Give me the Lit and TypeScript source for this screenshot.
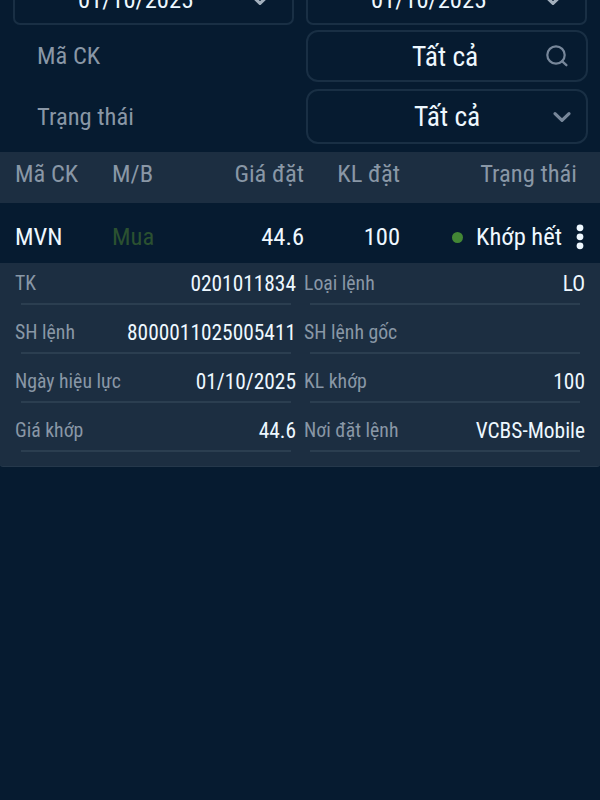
import { LitElement, html, css, svg } from "lit";
import { customElement } from "lit/decorators.js";

const chevron = html`<svg class="chev" viewBox="0 0 20 14" width="20" height="14">
  ${svg`<path d="M3 3.6 L10 10.4 L17 3.6" fill="none" stroke="currentColor" stroke-width="3.2" stroke-linecap="round" stroke-linejoin="round"/>`}
</svg>`;

const search = html`<svg class="search" viewBox="0 0 24 24" width="24" height="24">
  ${svg`<circle cx="11" cy="11" r="8.7" fill="none" stroke="currentColor" stroke-width="2.2"/><path d="M17 17.2 L21.4 21.2" stroke="currentColor" stroke-width="2.3" stroke-linecap="round"/>`}
</svg>`;

const details = [
  ["TK", "0201011834", "Loại lệnh", "LO"],
  ["SH lệnh", "8000011025005411", "SH lệnh gốc", ""],
  ["Ngày hiệu lực", "01/10/2025", "KL khớp", "100"],
  ["Giá khớp", "44.6", "Nơi đặt lệnh", "VCBS-Mobile"],
];

@customElement("app-root")
export class AppRoot extends LitElement {
  static styles = css`
    :host {
      display: block;
      width: 600px;
      height: 800px;
      overflow: hidden;
      background: #061b30;
      color: #eef8ff;
      font-family: "Roboto Condensed", Roboto, sans-serif;
      font-stretch: 75%;
      font-size: 24.55px;
      white-space: nowrap;
    }
    * { box-sizing: border-box; }
    svg { display: block; flex: none; }
    .dates { display: flex; gap: 12px; padding-left: 13px; height: 25px; align-items: flex-end; }
    .box { border: 2px solid #192f44; border-radius: 12px; display: flex; align-items: center; }
    .date { width: 281px; height: 51px; border-radius: 7px; padding: 0 22px 0 63px; justify-content: space-between; flex: none; }
    .date .txt { margin-top: -1px; }
    .field { display: flex; justify-content: space-between; padding: 0 12px 0 37px; }
    .field.code { margin-top: 5px; height: 52px; }
    .field.state { margin-top: 7px; height: 55px; }
    .field .label { color: #8997a6; line-height: 51px; }
    .field.state .label { line-height: 55px; }
    .field .box { width: 282px; font-size: 27.5px; justify-content: space-between; }
    .code .box { padding: 0 17px 0 104px; }
    .state .box { padding: 0 14px 0 106px; }
    .box svg { color: #77879a; }
    .date.box svg { color: #a3b0bd; }
    .grid { display: grid; grid-template-columns: 97px 89px 103px 96px 1fr; padding-left: 15px; align-items: start; }
    .r { text-align: right; }
    .head { margin-top: 8px; height: 51px; background: #1c2e41; color: #8997a6; padding-right: 23px; line-height: 43px; }
    .order { height: 60px; padding-right: 15px; line-height: 54px; padding-top: 7px; }
    .buy { color: #2b5130; }
    .status { display: flex; align-items: center; justify-content: flex-end; }
    .dot { width: 11px; height: 11px; border-radius: 50%; background: #438735; margin-right: 13px; }
    .menu { margin-left: 13px; }
    .panel { background: #1c2e41; height: 204px; border-bottom: 1px solid #25384b; border-radius: 0 0 5px 5px / 0 0 2px 2px; }
    .line { display: flex; height: 49px; padding: 0 15px; gap: 8px; }
    .pair { position: relative; display: flex; justify-content: space-between; height: 41px; width: 281px; line-height: 42px; font-size: 21.4px; }
    .pair::after { content: ""; position: absolute; left: 6px; right: 5px; bottom: -1px; height: 2px; background: #2b3e50; }
    .pair .k { font-size: 19.75px; color: #8997a6; line-height: 41px; }
  `;

  render() {
    return html`
      <div class="dates">
        ${[0, 1].map(() => html`<div class="box date"><span class="txt">01/10/2025</span>${chevron}</div>`)}
      </div>
      <div class="field code">
        <span class="label">Mã CK</span>
        <div class="box"><span class="txt">Tất cả</span>${search}</div>
      </div>
      <div class="field state">
        <span class="label">Trạng thái</span>
        <div class="box"><span class="txt">Tất cả</span>${chevron}</div>
      </div>
      <div class="grid head">
        <span>Mã CK</span><span>M/B</span><span class="r">Giá đặt</span><span class="r">KL đặt</span><span class="r">Trạng thái</span>
      </div>
      <div class="grid order">
        <span>MVN</span><span class="buy">Mua</span><span class="r">44.6</span><span class="r">100</span>
        <div class="status">
          <i class="dot"></i><span>Khớp hết</span>
          <svg class="menu" width="10" height="28" viewBox="0 0 10 28">
            ${[4.8, 13.8, 22.8].map((y) => svg`<circle cx="5" cy=${y} r="3.4" fill="currentColor"/>`)}
          </svg>
        </div>
      </div>
      <div class="panel">
        ${details.map(
          ([a, b, c, d]) => html`<div class="line">
            <div class="pair"><span class="k">${a}</span><span>${b}</span></div>
            <div class="pair"><span class="k">${c}</span><span>${d}</span></div>
          </div>`
        )}
      </div>
    `;
  }
}
